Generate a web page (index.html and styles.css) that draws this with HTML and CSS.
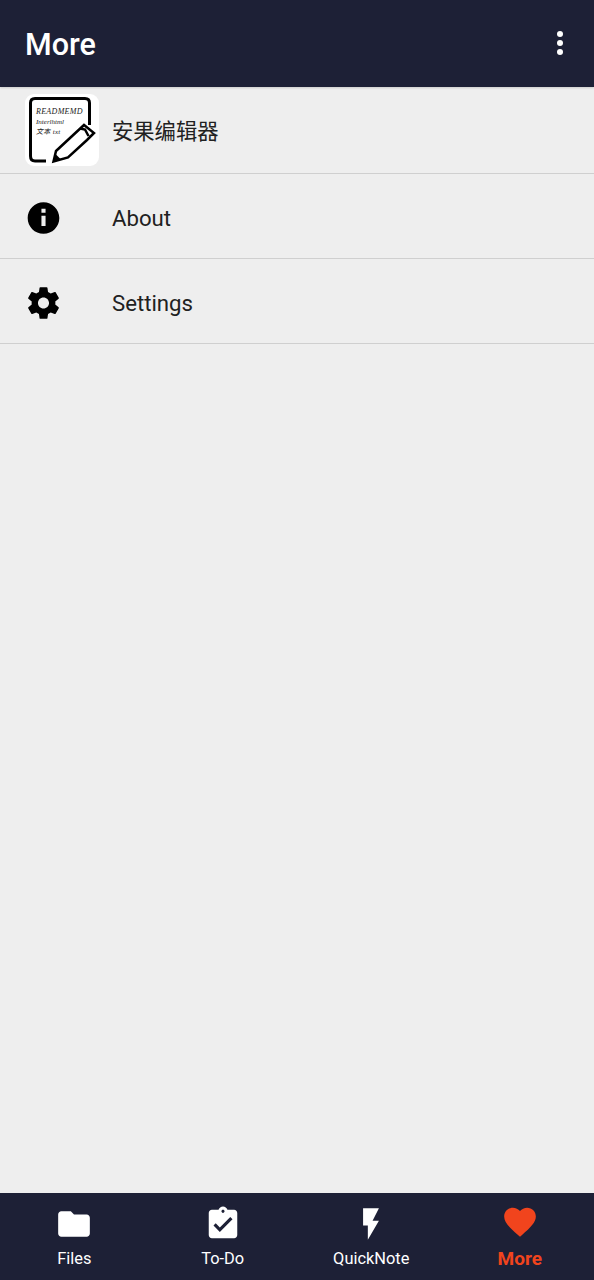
FILE: index.html
```html
<!DOCTYPE html>
<html lang="en">
<head>
<meta charset="utf-8">
<title>More</title>
<link rel="stylesheet" href="styles.css">
</head>
<body>
<div class="app">
  <header class="topbar">
    <h1 class="title">More</h1>
    <svg class="overflow" width="8" height="26" viewBox="0 0 8 26"><circle cx="4" cy="4" r="3"/><circle cx="4" cy="13" r="3"/><circle cx="4" cy="22" r="3"/></svg>
  </header>
  <main class="list">
    <div class="row row-app">
      <div class="logo">
        <svg class="logo-art" width="74" height="72" viewBox="0 0 74 72">
          <path class="logo-stroke" d="M21 67H10Q5.500 67 5.500 62V9Q5.500 4.500 10 4.500H60Q64.500 4.500 64.500 9V31"/>
          <path class="logo-stroke thin" d="M28.500 67.500L31 57L59 31L69 39L62 46L43 63.500Z M55 34.500L60 35.500L63.500 42"/>
          <path class="logo-fill" d="M28.500 67.500L30.500 60L36 65.500Z"/>
        </svg>
        <span class="logo-line l1">READMEMD</span>
        <span class="logo-line l2">Interlhtml</span>
        <span class="logo-line l3">文本 txt</span>
      </div>
      <span class="label cjk">安果编辑器</span>
    </div>
    <div class="row">
      <div class="icon-cell">
        <svg width="38" height="38" viewBox="0 0 24 24"><path d="M12 2C6.480 2 2 6.480 2 12s4.480 10 10 10 10-4.480 10-10S17.520 2 12 2zm1.300 15h-2.600v-6.500h2.600V17zm0-8.300h-2.600V6.200h2.600v2.500z"/></svg>
      </div>
      <span class="label">About</span>
    </div>
    <div class="row">
      <div class="icon-cell">
        <svg width="38" height="38" viewBox="0 0 24 24"><path d="M19.430 12.980c.04-.32.070-.64.070-.98s-.03-.66-.07-.98l2.110-1.650c.19-.15.240-.42.120-.64l-2-3.460c-.12-.22-.39-.3-.61-.22l-2.490 1c-.52-.4-1.080-.73-1.690-.98l-.38-2.650C14.460 2.180 14.250 2 14 2h-4c-.25 0-.46.180-.49.420l-.38 2.650c-.61.250-1.170.59-1.690.98l-2.490-1c-.23-.09-.49 0-.61.220l-2 3.460c-.13.220-.07.490.12.640l2.110 1.650c-.04.320-.07.650-.07.980s.03.660.07.980l-2.110 1.650c-.19.150-.24.420-.12.640l2 3.460c.12.220.39.300.61.220l2.490-1c.52.400 1.080.730 1.690.980l.38 2.650c.03.240.24.420.49.420h4c.25 0 .46-.18.49-.42l.38-2.650c.61-.25 1.170-.59 1.690-.98l2.490 1c.23.090.49 0 .61-.22l2-3.460c.12-.22.07-.49-.12-.64l-2.110-1.650zM12 15.500c-1.930 0-3.500-1.570-3.500-3.500s1.570-3.500 3.500-3.500 3.500 1.570 3.500 3.500-1.570 3.500-3.500 3.500z"/></svg>
      </div>
      <span class="label">Settings</span>
    </div>
  </main>
  <nav class="tabs">
    <div class="tab">
      <svg class="tab-icon" width="38" height="38" viewBox="0 0 24 24"><path d="M10 4H4c-1.100 0-2 .9-2 2v12c0 1.100.9 2 2 2h16c1.100 0 2-.9 2-2V8c0-1.100-.9-2-2-2h-8l-2-2z"/></svg>
      <span class="tab-label">Files</span>
    </div>
    <div class="tab">
      <svg class="tab-icon" width="38" height="38" viewBox="0 0 24 24"><path fill-rule="evenodd" d="M19 3h-4.180C14.400 1.840 13.300 1 12 1s-2.400.84-2.820 2H5c-1.100 0-2 .9-2 2v14c0 1.100.9 2 2 2h14c1.100 0 2-.9 2-2V5c0-1.100-.9-2-2-2zm-7 0c.55 0 1 .45 1 1s-.45 1-1 1-1-.45-1-1 .45-1 1-1zm-2 14l-4-4 1.410-1.410L10 14.170l6.590-6.590L18 9l-8 8z"/></svg>
      <span class="tab-label">To-Do</span>
    </div>
    <div class="tab">
      <svg class="tab-icon" width="38" height="38" viewBox="0 0 24 24"><path d="M7 2v11h3v9l7-12h-4l4-8z"/></svg>
      <span class="tab-label">QuickNote</span>
    </div>
    <div class="tab tab-active">
      <svg class="tab-icon" width="38" height="38" viewBox="0 0 24 24"><path d="M12 21.350l-1.450-1.320C5.400 15.360 2 12.280 2 8.500 2 5.420 4.420 3 7.500 3c1.740 0 3.410.81 4.500 2.090C13.090 3.810 14.760 3 16.500 3 19.580 3 22 5.420 22 8.500c0 3.780-3.400 6.860-8.550 11.540L12 21.350z"/></svg>
      <span class="tab-label">More</span>
    </div>
  </nav>
</div>
</body>
</html>
```
FILE: styles.css
```css
* { box-sizing: border-box; }
html, body { margin: 0; padding: 0; }
body { font-family: Roboto, "Noto Sans CJK SC", sans-serif; background: #eeeeee; }
.app { width: 594px; height: 1280px; display: flex; flex-direction: column; overflow: hidden; }
.topbar {
  height: 87px; flex: none; background: #1d2036; color: #fff;
  display: flex; align-items: center; justify-content: space-between;
  padding: 0 30px 0 25px; box-shadow: 0 1px 2px rgba(0,0,0,.15);
  position: relative;
}
.title { margin: 4px 0 0; font-size: 30.500px; font-weight: 500; line-height: 1; }
.overflow { fill: #fff; display: block; margin-top: -1px; }
.list { flex: 1; }
.row {
  height: 85px; display: flex; align-items: center;
  border-bottom: 1px solid #cfcfcf; padding: 5px 0 0 25px;
}
.row-app { height: 87px; padding-top: 0; }
.icon-cell { width: 87px; flex: none; }
.icon-cell svg { display: block; margin: -2px 0 0 0; transform: translateX(-.5px); }
.label { font-size: 22.200px; color: #212121; line-height: 1; }
.cjk { margin: 4px 0 0 13px; font-size: 21.300px; }
.logo {
  width: 74px; height: 72px; flex: none; background: #fff; border-radius: 9px;
  position: relative; overflow: hidden;
}
.logo-art { display: block; }
.logo-stroke { fill: none; stroke: #000; stroke-width: 3; }
.logo-stroke.thin { stroke-width: 2.500; fill: #fff; }
.logo-fill { fill: #000; }
.logo-line {
  position: absolute; left: 11px; font-family: "Liberation Serif", "Noto Sans CJK SC", serif;
  font-style: italic; color: #222; white-space: nowrap; line-height: 1; font-size: 7px;
}
.l1 { top: 14px; font-size: 8px; letter-spacing: .3px; }
.l2 { top: 25px; }
.l3 { top: 35px; letter-spacing: .3px; }
.tabs {
  height: 87px; flex: none; background: #1d2036; display: grid;
  grid-template-columns: repeat(4, 1fr);
}
.tab { display: flex; flex-direction: column; align-items: center; color: #fff; padding-top: 12px; }
.tab-icon { display: block; fill: #fff; }
.tab-label { font-size: 16.400px; line-height: 20px; margin-top: 6px; }
.tab-active { padding-top: 10px; }
.tab-active .tab-icon { fill: #f1441d; }
.tab-active .tab-label { color: #f1441d; font-size: 19px; font-weight: 700; line-height: 22px; margin-top: 7px; }
```
